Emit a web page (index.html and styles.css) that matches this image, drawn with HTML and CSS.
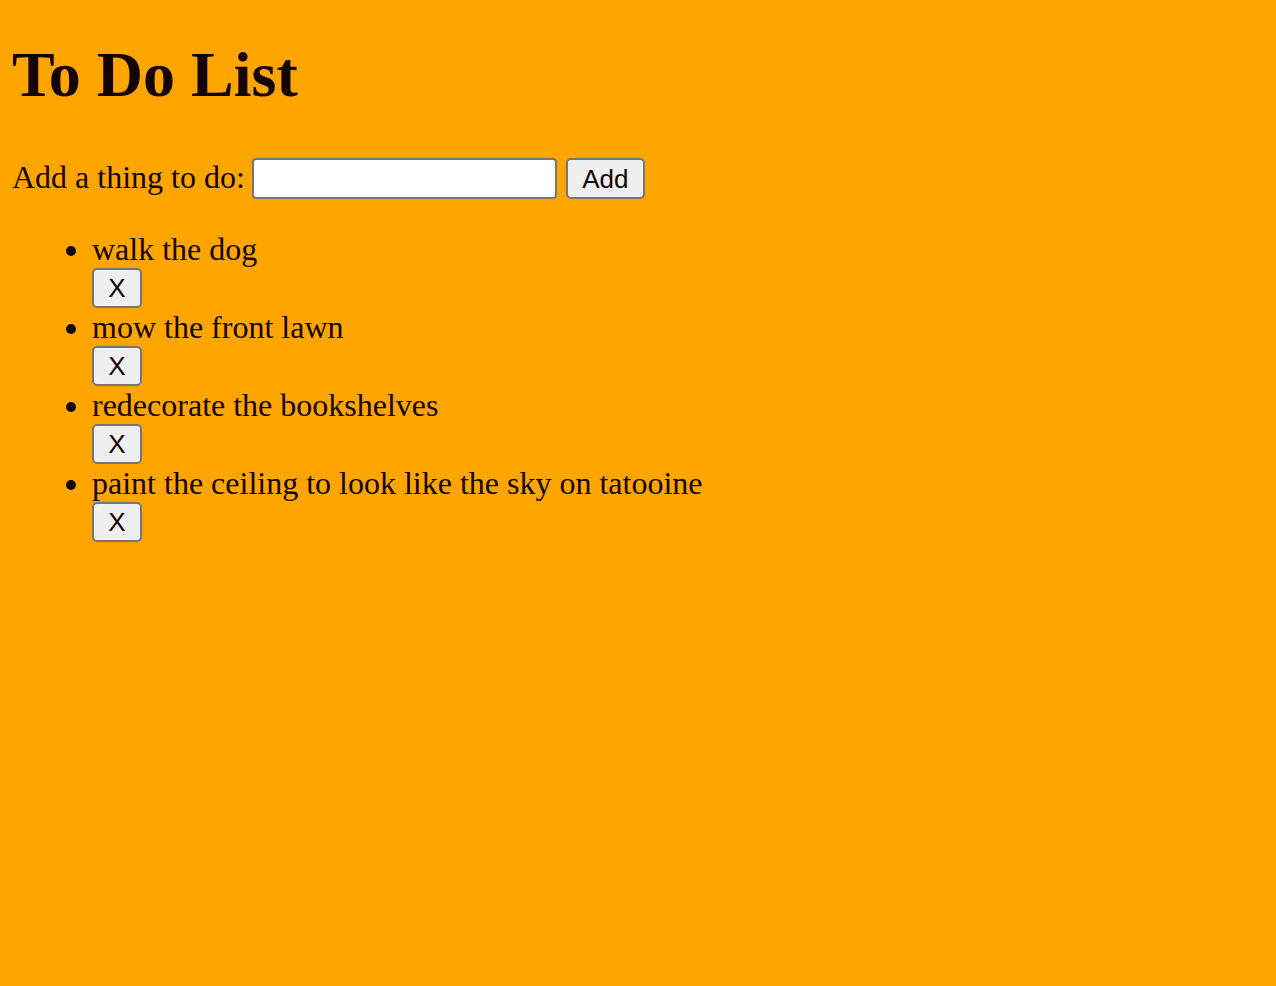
FILE: index.html
```html
<!DOCTYPE html>
<html lang="en">
<head>
<meta charset="utf-8">
<title>To Do List</title>
<link rel="stylesheet" href="styles.css">
</head>
<body>
<h1 class="title">To Do List</h1>
<form class="add-form">
  <label class="add-label" for="todo">Add a thing to do:</label>
  <input class="add-input" id="todo" type="text">
  <button class="btn btn-add" type="button">Add</button>
</form>
<ul class="todo-list">
  <li class="todo-item"><span class="todo-text">walk the dog</span><div class="todo-actions"><button class="btn btn-remove" type="button">X</button></div></li>
  <li class="todo-item"><span class="todo-text">mow the front lawn</span><div class="todo-actions"><button class="btn btn-remove" type="button">X</button></div></li>
  <li class="todo-item"><span class="todo-text">redecorate the bookshelves</span><div class="todo-actions"><button class="btn btn-remove" type="button">X</button></div></li>
  <li class="todo-item"><span class="todo-text">paint the ceiling to look like the sky on tatooine</span><div class="todo-actions"><button class="btn btn-remove" type="button">X</button></div></li>
</ul>
</body>
</html>
```

FILE: styles.css
```css
html, body {
  background: #ffa500;
}
body {
  margin: 0;
  padding: 0 12px;
  font-family: "Liberation Serif", "Times New Roman", serif;
  font-size: 32px;
  color: #140400;
}
.title {
  font-size: 64px;
  font-weight: bold;
  line-height: 74px;
  margin: 38px 0 46px;
}
.add-form {
  display: flex;
  align-items: flex-start;
  margin: 0;
  height: 41px;
}
.add-label {
  font-size: 32px;
  line-height: 37px;
  padding-top: 1px;
}
.add-input {
  box-sizing: border-box;
  width: 305px;
  height: 41px;
  border: 2px solid #767676;
  border-radius: 4px;
  background: #fff;
  margin: 0 0 0 7px;
  padding: 2px 4px;
  font-family: "Liberation Sans", Arial, sans-serif;
  font-size: 26px;
}
.btn {
  box-sizing: border-box;
  font-family: "Liberation Sans", Arial, sans-serif;
  font-size: 26px;
  color: #140400;
  background: #efefef;
  border: 2px solid #767676;
  border-radius: 5px;
  padding: 0 12px;
  line-height: 36px;
  margin: 0;
}
.btn-add {
  width: 79px;
  height: 41px;
  margin-left: 9px;
}
.todo-list {
  margin: 32px 0 0;
  padding-left: 80px;
}
.todo-item {
  line-height: 37px;
}
.todo-actions {
  height: 41px;
}
.btn-remove {
  display: block;
  width: 50px;
  height: 40px;
  padding: 0;
  text-align: center;
}
```
